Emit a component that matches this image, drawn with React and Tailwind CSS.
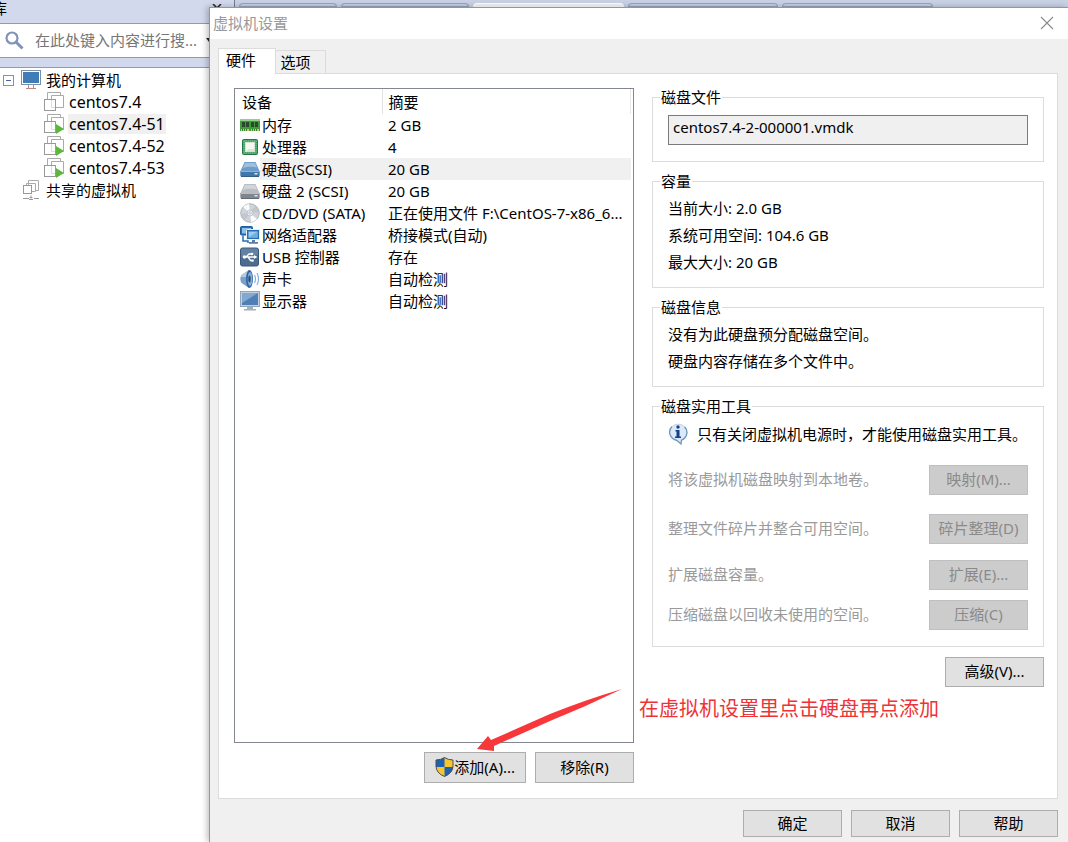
import { useState } from "react";

const machines = [
  { name: "centos7.4", running: false },
  { name: "centos7.4-51", running: true },
  { name: "centos7.4-52", running: true },
  { name: "centos7.4-53", running: true },
];

const devices = [
  { icon: MemoryIcon, name: "内存", summary: "2 GB" },
  { icon: CpuIcon, name: "处理器", summary: "4" },
  { icon: BlueDiskIcon, name: "硬盘(SCSI)", summary: "20 GB" },
  { icon: GrayDiskIcon, name: "硬盘 2 (SCSI)", summary: "20 GB" },
  { icon: DiscIcon, name: "CD/DVD (SATA)", summary: "正在使用文件 F:\\CentOS-7-x86_6..." },
  { icon: NetworkIcon, name: "网络适配器", summary: "桥接模式(自动)" },
  { icon: UsbIcon, name: "USB 控制器", summary: "存在" },
  { icon: SoundIcon, name: "声卡", summary: "自动检测" },
  { icon: DisplayIcon, name: "显示器", summary: "自动检测" },
];

const utilities = [
  { text: "将该虚拟机磁盘映射到本地卷。", button: "映射(M)...", space: "mt-[18px]" },
  { text: "整理文件碎片并整合可用空间。", button: "碎片整理(D)", space: "mt-[19px]" },
  { text: "扩展磁盘容量。", button: "扩展(E)...", space: "mt-4" },
  { text: "压缩磁盘以回收未使用的空间。", button: "压缩(C)", space: "mt-[10px]" },
];

function MemoryIcon() {
  return (
    <svg width="20" height="20" viewBox="0 0 20 20" className="shrink-0">
      <rect x="0" y="4" width="20" height="12" fill="#3f9a3c" />
      <rect x="0" y="4" width="20" height="2" fill="#8fd08a" />
      <path d="M2 7h3v5H2zM6 7h3v5H6zM11 7h3v5h-3zM15 7h3v5h-3z" fill="#2b4a2b" />
      <path d="M1 14h8v2H1zM11 14h8v2h-8z" fill="#d8c765" />
      <path d="M2.500 14v2M4.500 14v2M6.500 14v2M12.500 14v2M14.500 14v2M16.500 14v2" stroke="#3f7a2c" />
    </svg>
  );
}

function CpuIcon() {
  return (
    <svg width="20" height="20" viewBox="0 0 20 20" className="shrink-0">
      <rect x="2.500" y="2.500" width="15" height="15" rx="1" fill="#4aa56b" stroke="#277646" />
      <path d="M4 4h12M4 16h12M4 4v12M16 4v12" stroke="#7cc495" strokeDasharray="1 1" />
      <rect x="5.500" y="5.500" width="9" height="9" fill="#f6f7f1" stroke="#d5e2d0" />
      <path d="M6 14l3-2h5v2z" fill="#dfe2d6" />
    </svg>
  );
}

function Disk({ top, front, edge }) {
  return (
    <svg width="20" height="20" viewBox="0 0 20 20" className="shrink-0">
      <path d="M4.500 3h11l4 9v4.500q0 1-1 1h-17q-1 0-1-1V12z" fill={top} />
      <path d="M5 4h10l2 4.500Q9 7 3 9z" fill="#fff" opacity=".35" />
      <path d="M.5 12h19v4.500q0 1-1 1h-17q-1 0-1-1z" fill={front} />
      <path d="M1 12.500h18" stroke="#fff" opacity=".45" />
      <path d="M1 17.500h18" stroke={edge} />
      <rect x="14.500" y="14" width="3" height="1.500" fill="#d9ecd0" />
    </svg>
  );
}

function BlueDiskIcon() {
  return <Disk top="#6b9ecb" front="#3f77a8" edge="#345f87" />;
}

function GrayDiskIcon() {
  return <Disk top="#b9bdc3" front="#80868e" edge="#646a71" />;
}

function DiscIcon() {
  return (
    <svg width="20" height="20" viewBox="0 0 20 20" className="shrink-0">
      <circle cx="10" cy="10" r="9.300" fill="#cfd4da" stroke="#a4a9b0" strokeWidth=".8" />
      <path d="M10 10L3 4a9 9 0 0 1 6-3zM10 10l7 6a9 9 0 0 1-6 3z" fill="#fafbfc" />
      <path d="M10 10L1 11a9 9 0 0 0 4 6zM10 10l9-1a9 9 0 0 0-4-6z" fill="#b5bac2" opacity=".5" />
      <circle cx="10" cy="10" r="3" fill="#eef0f3" stroke="#b5bac2" strokeWidth=".8" />
      <circle cx="10" cy="10" r="1.200" fill="#fff" stroke="#9aa0a8" strokeWidth=".6" />
    </svg>
  );
}

function NetworkIcon() {
  return (
    <svg width="20" height="20" viewBox="0 0 20 20" className="shrink-0">
      <rect x=".5" y="1.500" width="12" height="8.500" rx="1" fill="#2c6db0" stroke="#1f5a99" />
      <rect x="2" y="3" width="9" height="5.500" fill="#8cc0ea" />
      <path d="M3 10.500v5.500h5v2" stroke="#2c6db0" strokeWidth="1.500" fill="none" />
      <rect x="6.500" y="4.500" width="13" height="10" rx="1" fill="#2c6db0" stroke="#e8f1fa" />
      <rect x="8.500" y="6.500" width="9" height="6" fill="#9ccdf4" />
      <path d="M8.500 12.500l9-6v6z" fill="#6faee3" />
      <path d="M12 15h3v2h-3zM9 17h9v1.800H9z" fill="#5a7fa6" />
    </svg>
  );
}

function UsbIcon() {
  return (
    <svg width="20" height="20" viewBox="0 0 20 20" className="shrink-0">
      <rect x=".5" y="1" width="18" height="18" rx="2" fill="#4c6c90" stroke="#3a5777" />
      <path d="M1 3q0-1.500 1.500-1.500h14Q18 1.500 18 3v5Q9 8 1 11z" fill="#7390b0" opacity=".6" />
      <path d="M4 10h11M6 10l3-3h2.500M8 10l2.500 3.500H12" stroke="#fff" strokeWidth="1.300" fill="none" />
      <circle cx="4.500" cy="10" r="1.800" fill="#fff" />
      <path d="M14 8l3.500 2-3.500 2z" fill="#fff" />
      <circle cx="12" cy="7" r="1.300" fill="#fff" />
      <rect x="11.500" y="12.500" width="2.200" height="2.200" fill="#fff" />
    </svg>
  );
}

function SoundIcon() {
  return (
    <svg width="20" height="20" viewBox="0 0 20 20" className="shrink-0">
      <path d="M1.500 6L9 1v18l-7.500-5Q-1 10 1.500 6z" fill="#7fa0c6" />
      <path d="M1.500 6L9 1v7H1z" fill="#b4cbe2" />
      <ellipse cx="9.500" cy="10" rx="3.500" ry="9" fill="#33659d" />
      <ellipse cx="10" cy="10" rx="2.300" ry="7" fill="#86b0da" />
      <ellipse cx="9.500" cy="10" rx="1.200" ry="3.500" fill="#24507f" />
      <path d="M14.500 6q2 4 0 8M17 4q3 6 0 12" stroke="#7fb2e0" strokeWidth="1.200" fill="none" />
    </svg>
  );
}

function DisplayIcon() {
  return (
    <svg width="20" height="20" viewBox="0 0 20 20" className="shrink-0">
      <rect x=".5" y=".5" width="19" height="15" fill="#c3cfdd" stroke="#94a5b8" />
      <rect x="2" y="2" width="16" height="12" fill="#4f80b5" />
      <path d="M2 2h16L2 12z" fill="#80a8d1" />
      <path d="M7 16h6v2H7zM4 18h12v1.500H4z" fill="#a3b0be" />
    </svg>
  );
}

function ComputerIcon() {
  return (
    <svg width="20" height="20" viewBox="0 0 20 20" className="shrink-0">
      <rect x=".5" y=".5" width="19" height="14" fill="#fff" stroke="#7d8fa0" />
      <rect x="2" y="2" width="16" height="11" fill="#3f7cb8" />
      <path d="M7.500 15v3M12.500 15v3M5 18.500h10" stroke="#b98a88" fill="none" />
    </svg>
  );
}

function MachineIcon({ running }) {
  return (
    <svg width="20" height="20" viewBox="0 0 20 20" className="shrink-0">
      <path d="M3.500 7V.5h13V3" stroke="#aaa" fill="none" />
      <path d="M7.500 7V3.500h12v12H12" stroke="#aaa" fill="none" />
      <rect x=".5" y="7.500" width="11" height="11" fill="#fff" stroke="#999" />
      <path d="M7.500 8v7.500H11" stroke="#ddd" fill="none" />
      {running && <path d="M12 10l8 5-8 5z" fill="#5cb83c" />}
    </svg>
  );
}

function SharedIcon() {
  return (
    <svg width="20" height="20" viewBox="0 0 20 20" className="shrink-0">
      <path d="M7.500 5V.5h10v10H15M5.500 5V3.500h9v8H11" stroke="#aaa" fill="none" />
      <rect x="2.500" y="5.500" width="8" height="8" fill="#fff" stroke="#999" />
      <path d="M2 18.500h6M8 19.500h4M13 18.500h5M10 15.500v3M8.500 17.500h3" stroke="#999" fill="none" />
    </svg>
  );
}

function InfoIcon() {
  return (
    <svg width="20" height="22" viewBox="0 0 20 22" className="shrink-0">
      <path d="M10 .8a9.200 8.500 0 0 1 3.500 16.400L13 21l-4-3.500A9.200 8.500 0 0 1 10 .8z" fill="#dce9f6" />
      <path d="M4 3.500a9.200 8.500 0 0 0 5 14l4 3.500.5-3.800a9.200 8.500 0 0 0 3-13.500" stroke="#6d93be" strokeWidth="1.300" fill="none" />
      <path d="M4 3.500a9.200 8.500 0 0 1 12.500 0" stroke="#c5d5e6" fill="none" />
      <circle cx="10" cy="4" r="1.700" fill="#163f91" />
      <path d="M7.500 7H11.500v6.500H13V15H7v-1.500h1.500v-5h-1z" fill="#163f91" />
    </svg>
  );
}

function ShieldIcon() {
  return (
    <svg width="19" height="20" viewBox="0 0 19 20" className="shrink-0">
      <path d="M9.500.5Q13 3 18 3v6q0 7-8.500 10.500Q1 16 1 9V3q5 0 8.500-2.500z" fill="#f6c52f" />
      <path d="M9.500.5Q6 3 1 3v7h8.500zM9.500 10H18q-.6 6-8.500 9.500z" fill="#1c61b4" />
      <path
        d="M9.500.5Q13 3 18 3v6q0 7-8.500 10.500Q1 16 1 9V3q5 0 8.500-2.500z"
        fill="none"
        stroke="#4c4c4c"
      />
    </svg>
  );
}

function Button({ children, className = "h-[30px]", disabled }) {
  return (
    <button
      disabled={disabled}
      className={
        "flex min-w-[99px] items-center justify-center border border-[#adadad] bg-[#e1e1e1] pb-[2px] disabled:border-[#bfbfbf] disabled:bg-[#cccccc] disabled:text-[#8a8a8a] " +
        className
      }
    >
      {children}
    </button>
  );
}

function Group({ title, className = "", children }) {
  return (
    <fieldset className={"min-w-0 border border-[#dcdcdc] px-[15px] " + className}>
      <legend className="-ml-2 px-px leading-5">{title}</legend>
      {children}
    </fieldset>
  );
}

function Sidebar() {
  return (
    <aside className="flex w-[209px] shrink-0 flex-col overflow-hidden bg-white">
      <div className="h-6 overflow-hidden border-b border-[#8d9bb5] bg-[#d2d9ec]">
        <h2 className="-ml-2 leading-4">库</h2>
      </div>
      <label className="flex h-[33px] items-center pl-[5px]">
        <svg width="19" height="19" viewBox="0 0 19 19" className="shrink-0">
          <circle cx="7" cy="7" r="5.500" fill="none" stroke="#8192b8" strokeWidth="2.200" />
          <path d="M11 11l6.500 6.500" stroke="#8192b8" strokeWidth="3" />
        </svg>
        <input
          type="text"
          aria-label="搜索"
          placeholder="在此处键入内容进行搜..."
          className="ml-[11px] min-w-0 flex-1 pb-[2px] outline-none placeholder:text-[#767676]"
        />
        <svg width="3" height="5" viewBox="0 0 3 5" className="shrink-0">
          <path d="M0 0h3v4z" fill="#222" />
        </svg>
      </label>
      <div className="h-[11px] border-y border-[#8d9bb5] bg-[#d2d9ec]" />
      <ul className="pt-px">
        <li className="flex h-[22px] items-center pl-[3px]">
          <button aria-label="折叠" className="flex h-[11px] w-[11px] items-center justify-center border border-[#919191]">
            <span className="h-px w-[5px] bg-[#4b63a7]" />
          </button>
          <span className="ml-[7px] flex items-center gap-[5px]">
            <ComputerIcon />
            我的计算机
          </span>
        </li>
        {machines.map((m) => (
          <li key={m.name} className="flex h-[22px] items-center gap-[5px] pl-11 text-base leading-5">
            <MachineIcon running={m.running} />
            <span className={m.name === "centos7.4-51" ? "-mx-px bg-[#f0f0f0] px-px" : ""}>{m.name}</span>
          </li>
        ))}
        <li className="flex h-[22px] items-center gap-[5px] pl-[21px]">
          <SharedIcon />
          共享的虚拟机
        </li>
      </ul>
    </aside>
  );
}

function BackTabs() {
  return (
    <div className="flex h-[7px] overflow-hidden bg-[#c9d1e5]">
      <div className="flex w-[26px] shrink-0 justify-center border-r border-[#6d7a93] bg-[#d2d9ec] pt-1 pr-2">
        <svg width="11" height="8" viewBox="0 0 11 8">
          <path d="M1 0l8 8M9 0L1 8" stroke="#222" strokeWidth="1.500" />
        </svg>
      </div>
      <div className="flex flex-1 gap-1 pt-[3px] pl-1">
        <span className="w-[98px] rounded-t-md border border-[#98a5be] bg-[#c5d0e4]" />
        <span className="w-[128px] rounded-t-md border border-[#98a5be] bg-[#c5d0e4]" />
        <span className="w-[151px] rounded-t-md border border-white bg-[#f2f5fa]" />
        <span className="w-[150px] rounded-t-md border border-[#98a5be] bg-[#c5d0e4]" />
        <span className="w-[151px] rounded-t-md border border-[#98a5be] bg-[#c5d0e4]" />
      </div>
    </div>
  );
}

function DeviceTable({ selected, onSelect }) {
  return (
    <div className="flex-1 border border-[#828790] pr-[2px]">
      <table className="w-full table-fixed border-collapse text-left">
        <thead>
          <tr className="h-[25px]">
            <th className="w-[147px] border-r border-[#e2e2e2] pl-[7px] font-normal">设备</th>
            <th className="border-r border-[#e8e8e8] pl-[6px] font-normal">摘要</th>
          </tr>
        </thead>
        <tbody>
          {devices.map((d, i) => {
            const Icon = d.icon;
            const bg = i === selected ? "bg-[#f0f0f0]" : "";
            return (
              <tr key={d.name} className="h-[22px]" onClick={() => onSelect(i)}>
                <td className="p-0">
                  <div className="flex items-center pl-[5px]">
                    <Icon />
                    <span className={"h-[22px] flex-1 pl-[2px] leading-[22px] whitespace-nowrap " + bg}>{d.name}</span>
                  </div>
                </td>
                <td className={"truncate p-0 pl-[6px] " + bg}>{d.summary}</td>
              </tr>
            );
          })}
        </tbody>
      </table>
    </div>
  );
}

function DiskDetails() {
  return (
    <div className="flex min-w-0 flex-1 flex-col gap-[9px] pt-[13px]">
      <Group title="磁盘文件" className="pt-2 pb-4">
        <input
          readOnly
          aria-label="磁盘文件"
          value="centos7.4-2-000001.vmdk"
          className="block h-[30px] w-full border border-[#7a7a7a] bg-[#f0f0f0] px-1 pb-[6px] outline-none"
        />
      </Group>
      <Group title="容量" className="pt-1 pb-[11px] leading-[27px]">
        <p>当前大小: 2.0 GB</p>
        <p>系统可用空间: 104.6 GB</p>
        <p>最大大小: 20 GB</p>
      </Group>
      <Group title="磁盘信息" className="pt-1 pb-[11px] leading-[27px]">
        <p>没有为此硬盘预分配磁盘空间。</p>
        <p>硬盘内容存储在多个文件中。</p>
      </Group>
      <Group title="磁盘实用工具" className="pt-1 pb-4">
        <p className="flex h-[27px] items-center gap-[9px] whitespace-nowrap">
          <InfoIcon />
          只有关闭虚拟机电源时，才能使用磁盘实用工具。
        </p>
        {utilities.map((u) => (
          <div key={u.button} className={"flex items-center justify-between " + u.space}>
            <span className="pb-[2px] text-[#9a9a9a]">{u.text}</span>
            <Button disabled>{u.button}</Button>
          </div>
        ))}
      </Group>
      <div className="flex justify-end pt-px">
        <Button>高级(V)...</Button>
      </div>
    </div>
  );
}

export default function App() {
  const [selected, setSelected] = useState(2);

  return (
    <div className="flex min-h-screen bg-white font-['Noto_Sans','Noto_Sans_CJK_SC',sans-serif] text-[15px] leading-5 text-black">
      <Sidebar />
      <div className="flex min-w-0 flex-1 flex-col">
        <BackTabs />
        <main className="flex flex-1 flex-col border-t border-l border-[#8f96a5] bg-[#f0f0f0] shadow-[-2px_0_6px_rgba(0,0,0,0.25)]">
          <header className="flex h-[31px] items-center justify-between bg-white pr-[14px] pb-px pl-[3px]">
            <h1 className="text-[#999999]">虚拟机设置</h1>
            <button aria-label="关闭">
              <svg width="14" height="14" viewBox="0 0 14 14">
                <path d="M1 1l12 12M13 1L1 13" stroke="#8a8a8a" strokeWidth="1.100" />
              </svg>
            </button>
          </header>

          <div className="flex flex-1 flex-col pt-[9px] pr-[10px] pl-2">
            <div role="tablist" className="flex items-end">
              <button
                role="tab"
                aria-selected="true"
                className="relative z-10 -mb-px h-[26px] w-[58px] border border-b-0 border-[#dcdcdc] bg-white pr-3 pb-1"
              >
                硬件
              </button>
              <button role="tab" aria-selected="false" className="h-[23px] w-[50px] border border-b-0 border-l-0 border-[#dcdcdc] pr-[10px]">
                选项
              </button>
            </div>
            <div className="relative flex flex-1 gap-[18px] border border-[#dcdcdc] bg-white pr-[13px] pb-[15px] pl-[15px]">
              <div className="flex w-[400px] shrink-0 flex-col pt-[14px]">
                <DeviceTable selected={selected} onSelect={setSelected} />
                <div className="mt-[9px] flex justify-end gap-[9px]">
                  <Button className="h-[31px] px-[10px]">
                    <ShieldIcon />
                    添加(A)...
                  </Button>
                  <Button className="h-[31px]">移除(R)</Button>
                </div>
              </div>
              <DiskDetails />

              {/* note and arrow lying over the dialog */}
              <svg
                width="148"
                height="66"
                viewBox="0 0 148 66"
                className="pointer-events-none absolute bottom-[45px] left-[256px]"
              >
                <path d="M147 2Q110 13 75 27L16 53l-3-4L2 62l17 2v-5L75 34Q112 19 147 2z" fill="#f7373a" />
              </svg>
              <p className="absolute bottom-[77px] left-[420px] text-[20px] leading-6 whitespace-nowrap text-[#ee3338]">
                在虚拟机设置里点击硬盘再点添加
              </p>
            </div>
          </div>

          <footer className="flex justify-end gap-[9px] pt-[11px] pr-[10px] pb-[5px]">
            <Button className="h-[27px]">确定</Button>
            <Button className="h-[27px]">取消</Button>
            <Button className="h-[27px]">帮助</Button>
          </footer>
        </main>
      </div>
    </div>
  );
}
